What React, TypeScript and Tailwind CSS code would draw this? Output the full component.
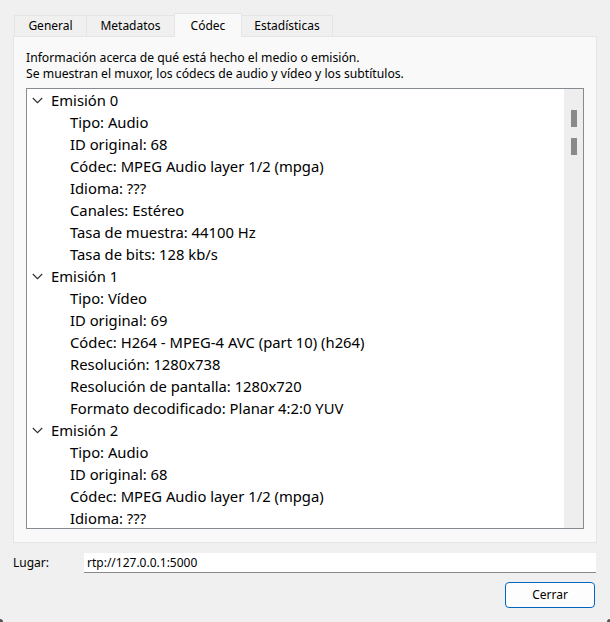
type Stream = { title: string; props: string[] };

const streams: Stream[] = [
  {
    title: 'Emisión 0',
    props: [
      'Tipo: Audio',
      'ID original: 68',
      'Códec: MPEG Audio layer 1/2 (mpga)',
      'Idioma: ???',
      'Canales: Estéreo',
      'Tasa de muestra: 44100 Hz',
      'Tasa de bits: 128 kb/s',
    ],
  },
  {
    title: 'Emisión 1',
    props: [
      'Tipo: Vídeo',
      'ID original: 69',
      'Códec: H264 - MPEG-4 AVC (part 10) (h264)',
      'Resolución: 1280x738',
      'Resolución de pantalla: 1280x720',
      'Formato decodificado: Planar 4:2:0 YUV',
    ],
  },
  {
    title: 'Emisión 2',
    props: ['Tipo: Audio', 'ID original: 68', 'Códec: MPEG Audio layer 1/2 (mpga)', 'Idioma: ???'],
  },
];

const tabs = [
  { label: 'General', width: 'w-[73px]' },
  { label: 'Metadatos', width: 'w-[89px]' },
  { label: 'Códec', width: 'w-[68px]' },
  { label: 'Estadísticas', width: 'w-[92px]' },
];

function Chevron() {
  return (
    <svg width="11" height="7" viewBox="0 0 11 7" className="ml-[5px] mr-[8px] shrink-0">
      <polyline points="0.8,1 5.5,5.7 10.2,1" fill="none" stroke="#333" strokeWidth="1.2" />
    </svg>
  );
}

export default function App() {
  return (
    <div
      className="relative flex h-[622px] w-[610px] flex-col bg-[#f0f0f0] text-[#000] overflow-hidden"
      style={{ fontFamily: '"Noto Sans", "Open Sans", sans-serif' }}
    >
      <div className="flex items-end pl-[14px] pt-[13px]">
        {tabs.map(tab => {
          const active = tab.label === 'Códec';
          return (
            <div
              key={tab.label}
              className={
                active
                  ? `relative z-10 -mb-px -mr-px flex h-[24px] items-center justify-center border border-b-0 border-[#e5e5e5] bg-[#f9f9f9] text-[12px] ${tab.width}`
                  : `-mr-px flex h-[21px] items-center justify-center border border-b-0 border-[#e5e5e5] bg-[#f0f0f0] text-[12px] ${tab.width}`
              }
            >
              {tab.label}
            </div>
          );
        })}
      </div>

      <div className="mx-[13px] flex h-[507px] flex-col border border-[#e5e5e5] bg-[#f9f9f9] px-[12px] pt-[13px]">
        <p className="text-[12.2px] leading-[16px]">
          Información acerca de qué está hecho el medio o emisión.
          <br />
          Se muestran el muxor, los códecs de audio y vídeo y los subtítulos.
        </p>

        <div className="mt-[6px] flex h-[441px] border border-[#868a91] bg-white">
          <div className="flex-1 overflow-hidden">
            {streams.map(stream => (
              <div key={stream.title}>
                <div className="flex h-[22px] items-center text-[14.8px]">
                  <Chevron />
                  <span>{stream.title}</span>
                </div>
                {stream.props.map((prop, i) => (
                  <div key={i} className="flex h-[22px] items-center pl-[43px] text-[14.8px]">
                    {prop}
                  </div>
                ))}
              </div>
            ))}
          </div>
          <div className="flex w-[19px] flex-col items-center bg-[#eeeeee] pt-[21px]">
            <div className="h-[17px] w-[6px] bg-[#8a8a8a]" />
            <div className="mt-[11px] h-[17px] w-[6px] bg-[#8a8a8a]" />
          </div>
        </div>
      </div>

      <div className="mt-[10px] flex items-center pl-[13px] pr-[14px]">
        <span className="w-[71px] text-[12px]">Lugar:</span>
        <div className="flex h-[20px] flex-1 items-center border-b border-[#8a8a8a] bg-white pl-[3px] text-[12px]">
          rtp://127.0.0.1:5000
        </div>
      </div>

      <div className="mt-[9px] flex justify-end pr-[15px]">
        <button
          type="button"
          className="flex h-[26px] w-[90px] items-center justify-center rounded-[4px] border border-[#0067c0] bg-[#fdfdfd] text-[12px]"
        >
          Cerrar
        </button>
      </div>

      <div className="absolute bottom-0 left-0 h-[3px] w-[3px] bg-[#555] rounded-tr-[3px]" />
      <div className="absolute bottom-0 right-0 h-[3px] w-[3px] bg-[#555] rounded-tl-[3px]" />
    </div>
  );
}
